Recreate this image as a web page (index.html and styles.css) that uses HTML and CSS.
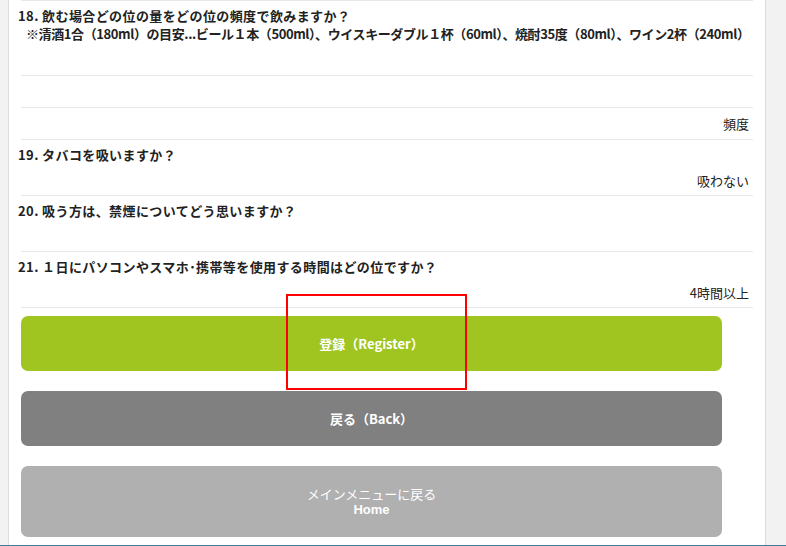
FILE: index.html
```html
<!DOCTYPE html>
<html lang="ja">
<head>
  <meta charset="UTF-8" />
  <meta name="viewport" content="width=device-width, initial-scale=1.0"/>
  <title>アンケート</title>
  <link rel="stylesheet" href="styles.css">
</head>
<body>
  <div class="page">
    <div class="sheet">
      <div class="item">
        <div class="q">18. 飲む場合どの位の量をどの位の頻度で飲みますか？</div>
        <div class="note">※清酒1合（180ml）の目安...ビール１本（500ml）、ウイスキーダブル１杯（60ml）、焼酎35度（80ml）、ワイン2杯（240ml）</div>
        <div class="a"></div>
      </div>
      <div class="item single"><div class="a"></div></div>
      <div class="item single"><div class="a">頻度</div></div>

      <div class="item">
        <div class="q">19. タバコを吸いますか？</div>
        <div class="a">吸わない</div>
      </div>
      <div class="item">
        <div class="q">20. 吸う方は、禁煙についてどう思いますか？</div>
        <div class="a"></div>
      </div>
      <div class="item last">
        <div class="q">21. １日にパソコンやスマホ･携帯等を使用する時間はどの位ですか？</div>
        <div class="a">4時間以上</div>
      </div>

      <div class="buttons">
        <button class="btn btn-register">登録（Register）</button>
        <button class="btn btn-back">戻る（Back）</button>
        <button class="btn btn-home"><span class="light">メインメニューに戻る</span><span class="en">Home</span></button>
      </div>

      <div class="mark"></div>
    </div>
  </div>
</body>
</html>
```

FILE: styles.css
```css
:root {
  --line: #e8e8e8;
  --text: #222;
  --green: #a0c520;
  --gray: #808080;
  --gray-light: #b0b0b0;
}

* {
  margin: 0;
  padding: 0;
  box-sizing: border-box;
}

body {
  font-family: "Noto Sans CJK JP", "Liberation Sans", sans-serif;
  font-size: 13px;
  color: var(--text);
  background: #f2f2f2;
  height: 546px;
  overflow: hidden;
  border-bottom: 1px solid #3f7c9c;
}

.page {
  margin-left: 8px;
  width: 758px;
  height: 545px;
  background: #fff;
  border-left: 1px solid #dcdcdc;
  border-right: 1px solid #dcdcdc;
  padding: 0 12px;
}

.sheet {
  position: relative;
}

.item {
  border-top: 1px solid var(--line);
  padding: 5px 4px 4px 0;
}

.item.last {
  border-bottom: 1px solid var(--line);
}

.q {
  margin-left: -3px;
  font-weight: bold;
  line-height: 20px;
  letter-spacing: 0.4px;
}

.note {
  margin-left: 5px;
  font-weight: bold;
  line-height: 16px;
  white-space: nowrap;
  letter-spacing: -0.4px;
  margin-bottom: 9px;
}

.a {
  text-align: right;
  line-height: 20px;
  min-height: 20px;
  margin-top: 6px;
}

.item.single {
  padding: 6px 4px 5px 0;
}

.item.single .a {
  margin-top: 0;
}

.buttons {
  display: flex;
  flex-direction: column;
  gap: 20px;
  padding-top: 8px;
  width: 701px;
}

.btn {
  border: none;
  border-radius: 7px;
  color: #fff;
  font-family: inherit;
  font-size: 13px;
  font-weight: bold;
  height: 55px;
  line-height: 16px;
  cursor: pointer;
}

.btn-register {
  background: var(--green);
}

.btn-back {
  background: var(--gray);
}

.btn-home {
  background: var(--gray-light);
  height: 71px;
  display: flex;
  flex-direction: column;
  align-items: center;
  justify-content: center;
  gap: 1px;
}

.btn-home .light {
  font-weight: normal;
  line-height: 15px;
}

.btn-home .en {
  font-family: "Liberation Sans", sans-serif;
  line-height: 15px;
}

.mark {
  position: absolute;
  left: 265px;
  top: 294px;
  width: 181px;
  height: 96px;
  border: 2px solid #f00;
}
```
